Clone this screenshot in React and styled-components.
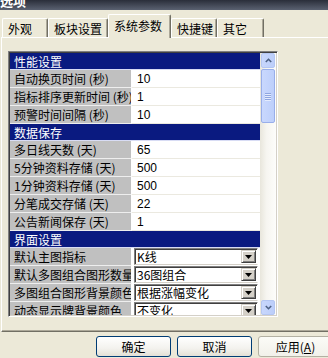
import React from 'react';
import styled, { createGlobalStyle } from 'styled-components';

const GlobalStyle = createGlobalStyle`
  html, body { margin: 0; padding: 0; }
  body {
    background: #ece9d8;
    font-family: "Noto Sans CJK SC", "Liberation Sans", sans-serif;
    font-size: 12px;
    color: #000;
  }
`;

const sections = [
  {
    title: '性能设置',
    rows: [
      { label: '自动换页时间 (秒)', value: '10' },
      { label: '指标排序更新时间 (秒)', value: '1' },
      { label: '预警时间间隔 (秒)', value: '10' },
    ],
  },
  {
    title: '数据保存',
    rows: [
      { label: '多日线天数 (天)', value: '65' },
      { label: '5分钟资料存储 (天)', value: '500' },
      { label: '1分钟资料存储 (天)', value: '500' },
      { label: '分笔成交存储 (天)', value: '22' },
      { label: '公告新闻保存 (天)', value: '1' },
    ],
  },
  {
    title: '界面设置',
    rows: [
      { label: '默认主图指标', value: 'K线', combo: true },
      { label: '默认多图组合图形数量', value: '36图组合', combo: true },
      { label: '多图组合图形背景颜色', value: '根据涨幅变化', combo: true },
      { label: '动态显示牌背景颜色', value: '不变化', combo: true },
    ],
  },
];

const tabs = [
  { name: '外观', w: 46 },
  { name: '板块设置', w: 60 },
  { name: '系统参数', w: 63, active: true },
  { name: '快捷键', w: 46 },
  { name: '其它', w: 47 },
];

const Window = styled.div`
  width: 328px;
  height: 358px;
  overflow: hidden;
  display: flex;
  flex-direction: column;
  background: #ece9d8;
`;

const TitleBar = styled.div`
  flex: none;
  height: 10px;
  display: flex;
  align-items: flex-end;
  overflow: hidden;
  background: linear-gradient(#2a2e3a, #5a6171);
  color: #fff;
  font-size: 13px;
  font-weight: bold;
  line-height: 14px;
  padding-bottom: 2px;
  box-sizing: border-box;
`;

const TabStrip = styled.div`
  flex: none;
  height: 27px;
  display: flex;
  align-items: flex-end;
  padding-left: 2px;
  position: relative;
  z-index: 1;
`;

const Tab = styled.div`
  flex: none;
  box-sizing: border-box;
  width: ${p => p.w}px;
  height: ${p => (p.active ? 24 : 19)}px;
  margin-bottom: ${p => (p.active ? -1 : 0)}px;
  padding-left: 5px;
  padding-top: ${p => (p.active ? 3 : 2)}px;
  line-height: 16px;
  background: #ece9d8;
  border-top: 1px solid #fff;
  border-left: 1px solid #fff;
  border-right: 1px solid #716f64;
  border-radius: 2px 2px 0 0;
  box-shadow: inset -1px 0 #aca899;
  white-space: nowrap;
`;

const Panel = styled.div`
  flex: none;
  width: 340px;
  height: 295px;
  box-sizing: border-box;
  margin-left: 1px;
  border-top: 1px solid #fff;
  border-left: 1px solid #fff;
  border-bottom: 1px solid #716f64;
  box-shadow: inset 0 -1px #aca899;
  padding: 13px 0 0 6px;
`;

const ListBox = styled.div`
  width: 270px;
  height: 266px;
  box-sizing: border-box;
  display: flex;
  border-top: 1px solid #808080;
  border-left: 1px solid #808080;
  border-right: 1px solid #fff;
  border-bottom: 1px solid #fff;
  box-shadow: inset 1px 1px #404040, inset -1px -1px #d4d0c8;
  padding: 1px;
  background: #fff;
`;

const Rows = styled.div`
  flex: 1;
  min-width: 0;
  overflow: hidden;
`;

const SectionHead = styled.div`
  height: 17px;
  line-height: 17px;
  padding-left: 4px;
  background: #0a1a80;
  color: #fff;
  border-bottom: 1px solid #d8dcf4;
  box-sizing: border-box;
`;

const Row = styled.div`
  height: 18px;
  display: flex;
`;

const Label = styled.div`
  flex: none;
  width: 122px;
  box-sizing: border-box;
  padding-left: 4px;
  line-height: 17px;
  background: #c0c0c0;
  border-bottom: 1px solid #eeeeee;
  border-right: 1px solid #fff;
  overflow: hidden;
  white-space: nowrap;
`;

const Value = styled.div`
  flex: 1;
  box-sizing: border-box;
  padding-left: 5px;
  line-height: 18px;
  border-bottom: 1px solid #ebe9e0;
  font-family: "Liberation Sans", sans-serif;
  font-size: 12px;
`;

const ComboCell = styled.div`
  flex: 1;
  box-sizing: border-box;
  padding: 0 2px 1px 2px;
`;

const Combo = styled.div`
  height: 17px;
  box-sizing: border-box;
  display: flex;
  border-top: 1px solid #808080;
  border-left: 1px solid #808080;
  border-right: 1px solid #fff;
  border-bottom: 1px solid #d4d0c8;
  box-shadow: inset 1px 1px #404040;
  background: #fff;
  padding: 1px;
`;

const ComboText = styled.div`
  flex: 1;
  overflow: hidden;
  white-space: nowrap;
  padding-left: 1px;
  line-height: 14px;
  font-size: 12px;
`;

const ComboButton = styled.div`
  flex: none;
  width: 15px;
  box-sizing: border-box;
  background: #d4d0c8;
  border-top: 1px solid #d4d0c8;
  border-left: 1px solid #d4d0c8;
  border-right: 1px solid #404040;
  border-bottom: 1px solid #404040;
  box-shadow: inset 1px 1px #fff, inset -1px -1px #808080;
  display: flex;
  align-items: center;
  justify-content: center;
`;

const ScrollBar = styled.div`
  flex: none;
  width: 16px;
  display: flex;
  flex-direction: column;
  background: linear-gradient(to right, #e8e6dc, #f6f5f0 40%, #fdfdfb);
`;

const ScrollButton = styled.div`
  flex: none;
  height: 15px;
  box-sizing: border-box;
  margin: 0 1px;
  border: 1px solid #b4c6f2;
  border-radius: 2px;
  background: linear-gradient(to right, #c8d7fc, #bccefa);
  display: flex;
  align-items: center;
  justify-content: center;
`;

const Track = styled.div`
  flex: 1;
  padding: 1px 1px 0;
`;

const Thumb = styled.div`
  height: 54px;
  box-sizing: border-box;
  border: 1px solid #98aeea;
  border-radius: 2px;
  background: linear-gradient(to right, #c9d8fd, #bdcffb);
  display: flex;
  flex-direction: column;
  align-items: center;
  justify-content: center;
  gap: 1px;
`;

const Grip = styled.div`
  width: 6px;
  height: 1px;
  background: #8fa6e0;
  box-shadow: 0 1px #e4ecfe;
`;

const Footer = styled.div`
  flex: 1;
  display: flex;
  align-items: flex-start;
  gap: 6px;
  padding: 4px 0 0 96px;
`;

const Button = styled.div`
  flex: none;
  width: 75px;
  height: 21px;
  box-sizing: border-box;
  border: 1px solid ${p => (p.dim ? '#b3b1a3' : '#003c74')};
  border-radius: 3px;
  background: ${p =>
    p.dim
      ? 'linear-gradient(#fbfbf7, #f2f1ea)'
      : 'linear-gradient(#ffffff, #f3f2ee 60%, #e3e0d5)'};
  text-align: center;
  line-height: 19px;
  font-size: 12px;
  u { text-decoration: underline; }
`;

const Arrow = ({ down }) => (
  <svg width="7" height="5" viewBox="0 0 7 5">
    <path
      d={down ? 'M0.8 1 L3.5 3.7 L6.2 1' : 'M0.8 4 L3.5 1.3 L6.2 4'}
      fill="none"
      stroke="#4d6185"
      strokeWidth="1.6"
    />
  </svg>
);

const DropTriangle = () => (
  <svg width="7" height="4" viewBox="0 0 7 4">
    <path d="M0 0 H7 L3.5 4 Z" fill="#000" />
  </svg>
);

export default function App() {
  return (
    <Window>
      <GlobalStyle />
      <TitleBar>选项</TitleBar>
      <TabStrip>
        {tabs.map(t => (
          <Tab key={t.name} w={t.w} active={t.active}>
            {t.name}
          </Tab>
        ))}
      </TabStrip>
      <Panel>
        <ListBox>
          <Rows>
            {sections.map(s => (
              <React.Fragment key={s.title}>
                <SectionHead>{s.title}</SectionHead>
                {s.rows.map(r => (
                  <Row key={r.label}>
                    <Label>{r.label}</Label>
                    {r.combo ? (
                      <ComboCell>
                        <Combo>
                          <ComboText>{r.value}</ComboText>
                          <ComboButton>
                            <DropTriangle />
                          </ComboButton>
                        </Combo>
                      </ComboCell>
                    ) : (
                      <Value>{r.value}</Value>
                    )}
                  </Row>
                ))}
              </React.Fragment>
            ))}
          </Rows>
          <ScrollBar>
            <ScrollButton>
              <Arrow />
            </ScrollButton>
            <Track>
              <Thumb>
                <Grip />
                <Grip />
                <Grip />
                <Grip />
              </Thumb>
            </Track>
            <ScrollButton>
              <Arrow down />
            </ScrollButton>
          </ScrollBar>
        </ListBox>
      </Panel>
      <Footer>
        <Button>确定</Button>
        <Button>取消</Button>
        <Button dim>
          应用(<u>A</u>)
        </Button>
      </Footer>
    </Window>
  );
}
